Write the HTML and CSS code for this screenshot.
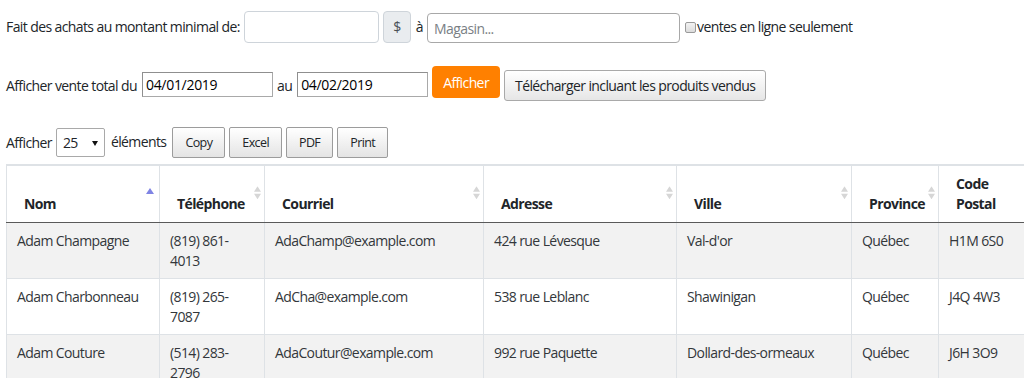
FILE: index.html
```html
<!DOCTYPE html>
<html lang="fr">
<head>
    <meta charset="UTF-8">
    <meta name="viewport" content="width=device-width, initial-scale=1.0">
    <title>Clients - ventes</title>
    <link rel="stylesheet" href="styles.css">
</head>
<body>
    <form class="filters">
        <div class="filter-row row-achats">
            <label for="montant">Fait des achats au montant minimal de:</label>
            <div class="input-group">
                <input type="text" id="montant" class="form-control montant">
                <span class="addon">$</span>
            </div>
            <span class="sep">à</span>
            <input type="text" class="magasin" placeholder="Magasin...">
            <label class="check"><input type="checkbox" class="checkbox">ventes en ligne seulement</label>
        </div>
        <div class="filter-row row-dates">
            <label for="date-debut" class="lbl">Afficher vente total du</label>
            <input type="text" id="date-debut" class="date" value="04/01/2019">
            <span class="lbl">au</span>
            <input type="text" class="date" value="04/02/2019">
            <button type="button" class="btn-orange">Afficher</button>
            <button type="button" class="btn-gray btn-download">Télécharger incluant les produits vendus</button>
        </div>
    </form>

    <div class="table-tools">
        <span>Afficher</span>
        <span class="select-wrap">
            <select class="page-size">
                <option>10</option>
                <option selected>25</option>
                <option>50</option>
                <option>100</option>
            </select>
        </span>
        <span class="elements">éléments</span>
        <div class="export-buttons">
            <button type="button" class="dt-button">Copy</button>
            <button type="button" class="dt-button">Excel</button>
            <button type="button" class="dt-button">PDF</button>
            <button type="button" class="dt-button">Print</button>
        </div>
    </div>

    <table class="clients">
        <colgroup>
            <col class="c-nom">
            <col class="c-tel">
            <col class="c-courriel">
            <col class="c-adresse">
            <col class="c-ville">
            <col class="c-province">
            <col class="c-postal">
        </colgroup>
        <thead>
            <tr>
                <th class="sorted">Nom<span class="sort-icon"><svg width="8" height="6" viewBox="0 0 8 6"><path d="M0 6 L4 0 L8 6 Z" fill="#7f84e4"/></svg></span></th>
                <th>Téléphone<span class="sort-icon"><svg width="7" height="13" viewBox="0 0 7 13"><path d="M0 5.5 L3.5 0 L7 5.5 Z M0 7.5 L3.5 13 L7 7.5 Z" fill="#d6d6d6"/></svg></span></th>
                <th>Courriel<span class="sort-icon"><svg width="7" height="13" viewBox="0 0 7 13"><path d="M0 5.5 L3.5 0 L7 5.5 Z M0 7.5 L3.5 13 L7 7.5 Z" fill="#d6d6d6"/></svg></span></th>
                <th>Adresse<span class="sort-icon"><svg width="7" height="13" viewBox="0 0 7 13"><path d="M0 5.5 L3.5 0 L7 5.5 Z M0 7.5 L3.5 13 L7 7.5 Z" fill="#d6d6d6"/></svg></span></th>
                <th>Ville<span class="sort-icon"><svg width="7" height="13" viewBox="0 0 7 13"><path d="M0 5.5 L3.5 0 L7 5.5 Z M0 7.5 L3.5 13 L7 7.5 Z" fill="#d6d6d6"/></svg></span></th>
                <th>Province<span class="sort-icon"><svg width="7" height="13" viewBox="0 0 7 13"><path d="M0 5.5 L3.5 0 L7 5.5 Z M0 7.5 L3.5 13 L7 7.5 Z" fill="#d6d6d6"/></svg></span></th>
                <th>Code Postal<span class="sort-icon"><svg width="7" height="13" viewBox="0 0 7 13"><path d="M0 5.5 L3.5 0 L7 5.5 Z M0 7.5 L3.5 13 L7 7.5 Z" fill="#d6d6d6"/></svg></span></th>
            </tr>
        </thead>
        <tbody>
            <tr>
                <td>Adam Champagne</td>
                <td>(819) 861-4013</td>
                <td>AdaChamp@example.com</td>
                <td>424 rue Lévesque</td>
                <td>Val-d'or</td>
                <td>Québec</td>
                <td>H1M 6S0</td>
            </tr>
            <tr>
                <td>Adam Charbonneau</td>
                <td>(819) 265-7087</td>
                <td>AdCha@example.com</td>
                <td>538 rue Leblanc</td>
                <td>Shawinigan</td>
                <td>Québec</td>
                <td>J4Q 4W3</td>
            </tr>
            <tr>
                <td>Adam Couture</td>
                <td>(514) 283-2796</td>
                <td>AdaCoutur@example.com</td>
                <td>992 rue Paquette</td>
                <td>Dollard-des-ormeaux</td>
                <td>Québec</td>
                <td>J6H 3O9</td>
            </tr>
        </tbody>
    </table>
</body>
</html>
```

FILE: styles.css
```css
html, body {
    overflow: hidden;
}
body {
    margin: 0;
    padding: 10px 0 0 6px;
    font-family: "Open Sans", "Noto Sans", sans-serif;
    font-size: 14px;
    letter-spacing: -0.6px;
    line-height: 20px;
    color: #212529;
    background-color: #ffffff;
}
input, button, select {
    font-family: inherit;
    letter-spacing: inherit;
    margin: 0;
}
.filter-row {
    display: flex;
    align-items: flex-start;
}

/* ligne 1 : montant minimal */
.row-achats {
    height: 34px;
    align-items: center;
    gap: 4px;
}
.input-group {
    display: flex;
    gap: 4px;
}
.montant {
    width: 135px;
    height: 32px;
    box-sizing: border-box;
    border: 1px solid #ced4da;
    border-radius: 4px;
    padding: 0 8px;
    font-size: 14px;
}
.addon {
    display: flex;
    align-items: center;
    justify-content: center;
    width: 28px;
    height: 32px;
    box-sizing: border-box;
    background-color: #e9ecef;
    border: 1px solid #ced4da;
    border-radius: 4px;
    color: #495057;
}
.sep {
    margin: 0 0 0 1px;
}
.magasin {
    width: 253px;
    height: 30px;
    margin-top: 2px;
    box-sizing: border-box;
    border: 1px solid #a8a8a8;
    border-radius: 4px;
    padding: 0 6px;
    font-size: 14px;
}
.magasin::placeholder {
    color: #7a7f85;
}
.check {
    display: flex;
    align-items: center;
    margin-left: 1px;
}
.checkbox {
    appearance: none;
    -webkit-appearance: none;
    width: 11px;
    height: 11px;
    margin: 0 1px 0 0;
    border: 1px solid #9a9a9a;
    border-radius: 2px;
    background: linear-gradient(#f2f2f2, #dcdcdc);
}

/* ligne 2 : dates */
.row-dates {
    margin-top: 22px;
    gap: 4px;
}
.row-dates .lbl {
    line-height: 25px;
    margin-top: 7px;
}
.row-dates .lbl + .date {
    margin-left: 1px;
}
.date {
    width: 131px;
    height: 25px;
    margin-top: 6px;
    box-sizing: border-box;
    border: 1px solid #a9a9a9;
    border-top-color: #8f8f8f;
    border-left-color: #8f8f8f;
    padding: 0 3px;
    font-size: 14px;
    letter-spacing: -0.3px;
    color: #000000;
}
.btn-orange {
    height: 32px;
    padding: 0 11px;
    background-color: #ff8000;
    color: #ffffff;
    border: none;
    border-radius: 4px;
    font-size: 14px;
}
.btn-gray {
    background: linear-gradient(#ffffff, #e6e6e6);
    border: 1px solid #a9a9a9;
    color: #212529;
    font-size: 14px;
}
.btn-download {
    height: 31px;
    margin: 4px 0 0 0;
    padding: 0 10px;
    border-radius: 3px;
}

/* outils du tableau */
.table-tools {
    display: flex;
    align-items: center;
    margin-top: 26px;
    height: 31px;
}
.select-wrap {
    position: relative;
    margin-left: 4px;
}
.select-wrap::after {
    content: "";
    position: absolute;
    right: 7px;
    top: 13px;
    border-left: 3px solid transparent;
    border-right: 3px solid transparent;
    border-top: 5px solid #111111;
}
.page-size {
    appearance: none;
    -webkit-appearance: none;
    display: block;
    width: 49px;
    height: 29px;
    padding: 0 0 0 6px;
    border: 1px solid #a9a9a9;
    border-radius: 2px;
    background: #ffffff;
    font-size: 14px;
    color: #212529;
}
.elements {
    margin: -2px 0 0 6px;
}
.export-buttons {
    display: flex;
    gap: 4px;
    margin-left: 6px;
}
.dt-button {
    height: 31px;
    padding: 0 12px;
    background: linear-gradient(#ffffff, #e4e4e4);
    border: 1px solid #9c9c9c;
    border-radius: 2px;
    font-size: 12.5px;
    color: #212529;
}

/* tableau */
.clients {
    margin-top: 6px;
    border-collapse: collapse;
    table-layout: fixed;
    width: 1040px;
    border: 1px solid #dee2e6;
    border-top-width: 2px;
}
.c-nom { width: 153px; }
.c-tel { width: 105px; }
.c-courriel { width: 219px; }
.c-adresse { width: 193px; }
.c-ville { width: 175px; }
.c-province { width: 87px; }
.c-postal { width: 108px; }
.clients th {
    position: relative;
    text-align: left;
    vertical-align: bottom;
    font-weight: 700;
    padding: 8px 30px 8px 17px;
    border-left: 1px solid #dee2e6;
    border-bottom: 1px solid #5a5a5a;
    white-space: normal;
}
.sort-icon {
    position: absolute;
    right: 3px;
    top: 50%;
    transform: translateY(-60%);
    display: flex;
}
.sorted .sort-icon {
    right: 5px;
    transform: translateY(-100%);
}
.clients td {
    vertical-align: top;
    padding: 8px 10px 7px;
    border: 1px solid #dee2e6;
    border-top: none;
}
.clients tbody tr:nth-child(odd) {
    background-color: #f2f2f2;
}
.clients tbody td {
    color: #33373b;
}
```
